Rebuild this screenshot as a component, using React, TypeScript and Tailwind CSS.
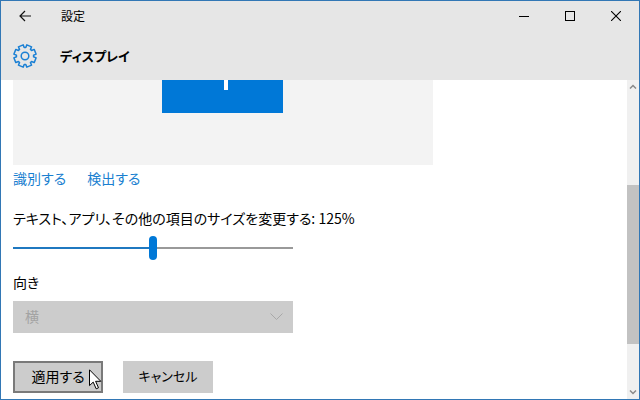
import React, { useState } from 'react';

const GearIcon = () => {
  const teeth = 8;
  const points: string[] = [];
  for (let i = 0; i < teeth; i++) {
    const base = ((i + 0.5) * 2 * Math.PI) / teeth;
    const corners = [
      [-0.3, 8.6],
      [-0.23, 11.3],
      [0.23, 11.3],
      [0.3, 8.6],
    ];
    corners.forEach(([offset, radius]) => {
      const x = 12 + radius * Math.cos(base + offset);
      const y = 12 + radius * Math.sin(base + offset);
      points.push(`${x.toFixed(2)},${y.toFixed(2)}`);
    });
  }

  return (
    <svg
      className="size-6 shrink-0"
      viewBox="0 0 24 24"
      fill="none"
      stroke="#1b80d4"
      strokeWidth="1.5"
      strokeLinejoin="round"
      aria-hidden="true"
    >
      <polygon points={points.join(' ')} />
      <circle cx="12" cy="12" r="3.8" />
    </svg>
  );
};

const BackIcon = () => (
  <svg width="12" height="12" viewBox="0 0 12 12" fill="none" stroke="#111" strokeWidth="1.2">
    <path d="M12 6H1M6 1L1 6l5 5" />
  </svg>
);

const CursorIcon = () => (
  <svg
    className="pointer-events-none absolute top-2 left-[76px]"
    width="13"
    height="21"
    viewBox="0 0 13 21"
    fill="#fff"
    stroke="#000"
    aria-hidden="true"
  >
    <path d="M.5.8v15.8l3.7-3.5 3 6.7 2.3-1-2.9-6.5h5.2z" />
  </svg>
);

const TitleBar = () => (
  <div className="flex h-[30px] items-center">
    <button aria-label="戻る" className="flex w-12 justify-center">
      <BackIcon />
    </button>
    <span className="ml-3 flex-1 text-xs">設定</span>
    <button aria-label="最小化" className="flex w-[46px] justify-center">
      <svg width="10" height="10" stroke="#000" shapeRendering="crispEdges">
        <path d="M0 5.5h10" />
      </svg>
    </button>
    <button aria-label="最大化" className="flex w-[46px] justify-center">
      <svg width="10" height="10" fill="none" stroke="#000">
        <rect x=".5" y=".5" width="9" height="9" />
      </svg>
    </button>
    <button aria-label="閉じる" className="flex w-[46px] justify-center">
      <svg width="10" height="10" stroke="#000" strokeWidth="1.1">
        <path d="M0 0l10 10M10 0L0 10" />
      </svg>
    </button>
  </div>
);

const ScrollBar = () => (
  <div className="flex w-3 shrink-0 flex-col items-center bg-[#f0f0f0]">
    <svg className="my-1 shrink-0" width="8" height="5" fill="none" stroke="#8a8a8a" strokeWidth="1.5">
      <path d="M1 4.5l3-3 3 3" />
    </svg>
    <div className="flex w-full flex-1 flex-col">
      <div className="flex-[92]" />
      <div className="flex-[159] bg-[#c2c2c2]" />
      <div className="flex-[42]" />
    </div>
    <svg className="my-1 shrink-0" width="8" height="5" fill="none" stroke="#8a8a8a" strokeWidth="1.5">
      <path d="M1 .5l3 3 3-3" />
    </svg>
  </div>
);

const sliderClasses = `
  h-6 w-full appearance-none bg-transparent
  [&::-webkit-slider-thumb]:h-6
  [&::-webkit-slider-thumb]:w-2
  [&::-webkit-slider-thumb]:appearance-none
  [&::-webkit-slider-thumb]:rounded-full
  [&::-webkit-slider-thumb]:bg-[#0078d7]
`;

export default function App() {
  const [scale, setScale] = useState(125);
  const filled = scale - 75;

  return (
    <div className="flex h-screen flex-col overflow-hidden border border-[#3277b5] bg-white font-['Noto_Sans_CJK_JP',sans-serif] text-sm text-black [font-feature-settings:'palt']">
      <header className="h-[79px] shrink-0 bg-[#e6e6e6]">
        <TitleBar />
        <div className="flex h-[50px] items-center gap-[23px] pl-3">
          <GearIcon />
          <h1 className="text-[13px] font-bold">ディスプレイ</h1>
        </div>
      </header>

      <div className="flex min-h-0 flex-1">
        <main className="min-w-0 flex-1 overflow-hidden pl-3">
          {/* Lower part of the monitor preview, scrolled under the header */}
          <div className="flex h-[85px] max-w-[420px] items-start justify-center bg-[#f3f3f3] pr-[2px]">
            <div className="flex h-[33px] w-[121px] justify-center bg-[#0078d7]">
              <div className="ml-2 h-[10px] w-1 bg-white" />
            </div>
          </div>

          <div className="mt-[3px] flex gap-[21px] leading-5 text-[#1a7fd0]">
            <a href="#identify">識別する</a>
            <a href="#detect">検出する</a>
          </div>

          <div className="mt-5 w-[280px]">
            <label htmlFor="scale" className="block leading-5 whitespace-nowrap">
              テキスト、アプリ、その他の項目のサイズを変更する: {scale}%
            </label>
            <div className="mt-2 grid items-center">
              <div className="col-start-1 row-start-1 h-[2px] bg-[#999]">
                <div className="h-full bg-[#1f78c0]" style={{ width: `${filled}%` }} />
              </div>
              <input
                id="scale"
                type="range"
                min={75}
                max={175}
                step={25}
                value={scale}
                onChange={(e) => setScale(Number(e.target.value))}
                className={`col-start-1 row-start-1 ${sliderClasses}`}
              />
            </div>
          </div>

          <div className="mt-3 w-[280px]">
            <label htmlFor="orientation" className="block leading-5">
              向き
            </label>
            <div className="mt-[9px] grid items-center">
              <select
                id="orientation"
                disabled
                className="col-start-1 row-start-1 h-8 w-full appearance-none bg-[#ccc] px-3 pb-[2px] text-[#a3a3a3] opacity-100"
              >
                <option>横</option>
              </select>
              <svg
                className="pointer-events-none col-start-1 row-start-1 mr-[10px] justify-self-end"
                width="13"
                height="8"
                fill="none"
                stroke="#a8a8a8"
              >
                <path d="M.5 .5l6 6 6-6" />
              </svg>
            </div>
          </div>

          <div className="mt-7 flex gap-5">
            <div className="relative">
              <button className="h-8 w-[90px] border-2 border-[#7a7a7a] bg-[#ccc] pb-[2px]">適用する</button>
              <CursorIcon />
            </div>
            <button className="h-8 w-[90px] bg-[#ccc] pb-[2px] text-[13px]">キャンセル</button>
          </div>
        </main>
        <ScrollBar />
      </div>
    </div>
  );
}
